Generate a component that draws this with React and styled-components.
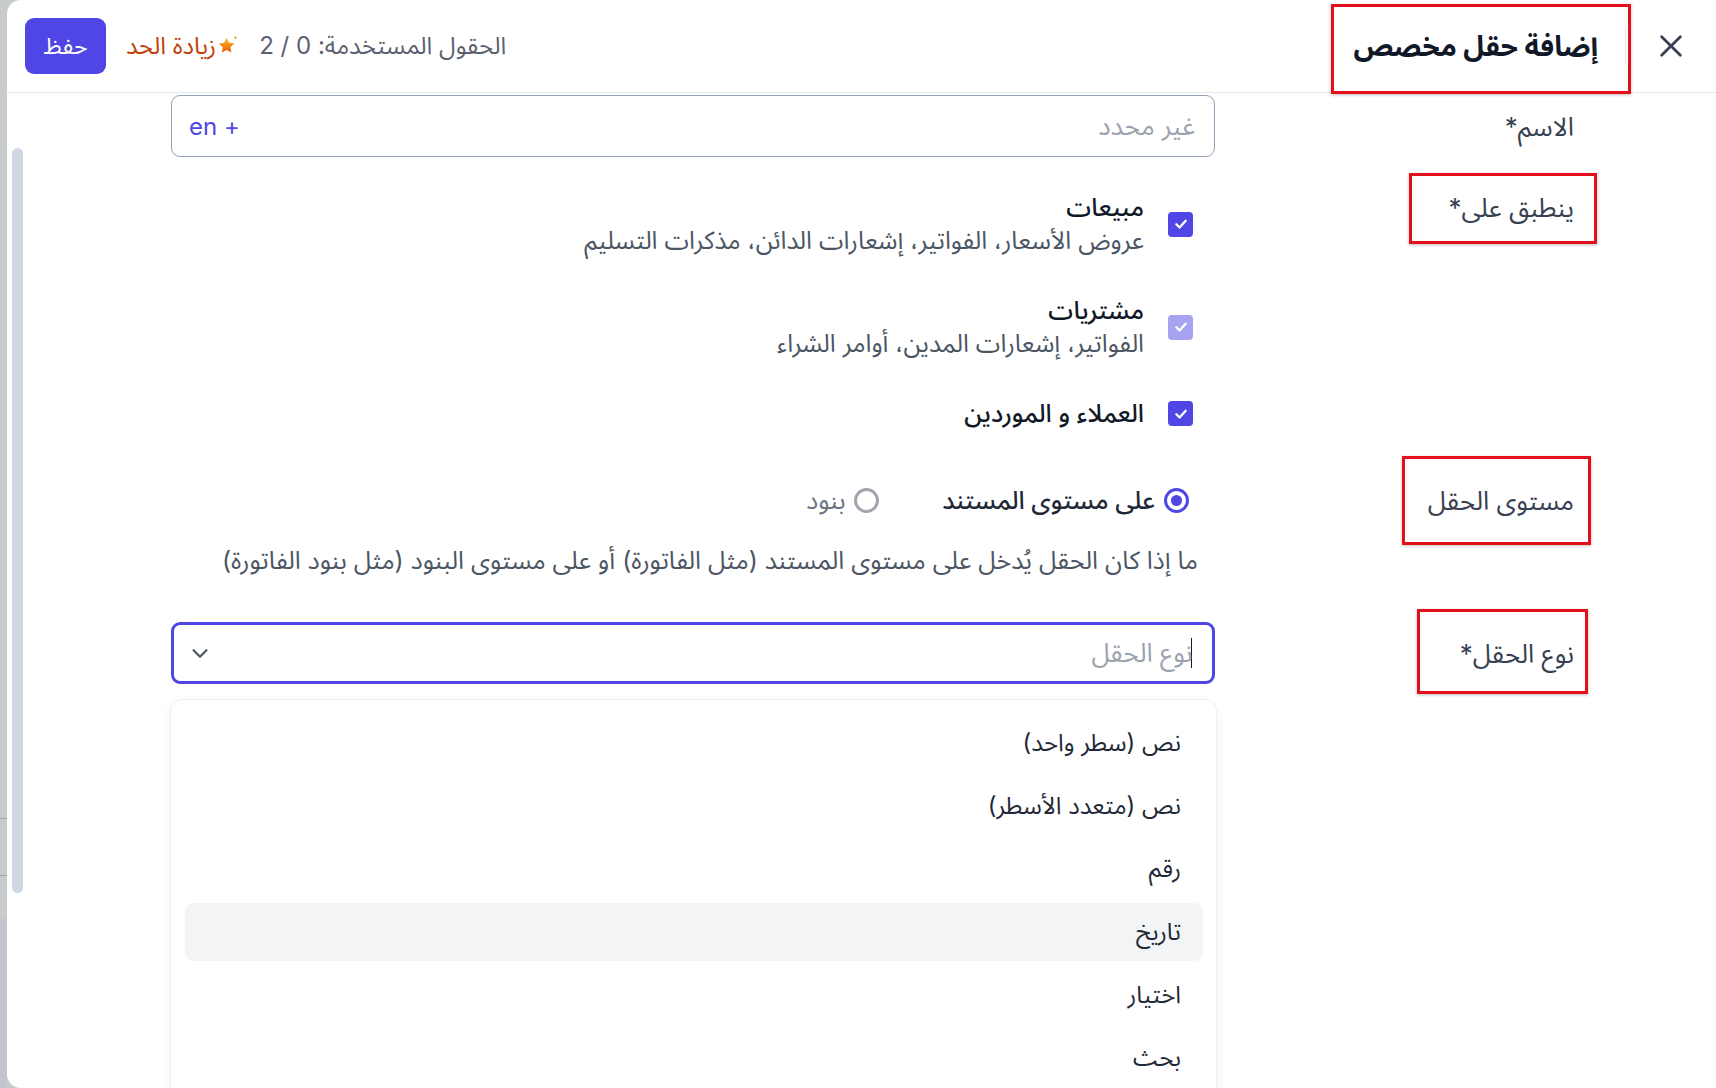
import styled, { createGlobalStyle } from "styled-components";

const GlobalStyle = createGlobalStyle`
  html, body {
    margin: 0;
    padding: 0;
    height: 100%;
  }
  body {
    font-family: Inter, "Noto Sans Arabic", "Noto Sans", "DejaVu Sans", sans-serif;
    background: #c9cccd;
    overflow: hidden;
    color: #1f2937;
  }
  #root {
    height: 100%;
  }
`;

const Page = styled.div`
  display: flex;
  height: 100vh;
`;

const Backdrop = styled.div`
  width: 7px;
  flex-shrink: 0;
  background:
    linear-gradient(#a3a7a9, #a3a7a9) 0 818px / 100% 1px no-repeat,
    linear-gradient(#a3a7a9, #a3a7a9) 0 875px / 100% 1px no-repeat,
    linear-gradient(#c9cccd 917px, #c3c6cc 917px);
`;

const Panel = styled.div`
  flex: 1;
  background: #fff;
  border-radius: 14px 0 0 14px;
  display: flex;
  flex-direction: column;
  overflow: hidden;
`;

const Header = styled.header`
  height: 93px;
  flex-shrink: 0;
  box-sizing: border-box;
  border-bottom: 1px solid #e5e7eb;
  display: flex;
  align-items: center;
  justify-content: space-between;
  padding: 0 31px 0 18px;
`;

const HeaderGroup = styled.div`
  display: flex;
  align-items: center;
  gap: ${(p) => p.$gap || 0}px;
`;

const CloseButton = styled.button`
  border: none;
  background: none;
  padding: 0;
  width: 28px;
  height: 28px;
  display: flex;
  align-items: center;
  justify-content: center;
  cursor: pointer;
  color: #374151;
`;

const Divider = styled.span`
  display: block;
  width: 1px;
  height: 34px;
  background: #e5e7eb;
  margin: 0 31px 0 27px;
`;

const Annotated = styled.span`
  position: relative;
  display: inline-block;
`;

const RedBox = styled.span`
  position: absolute;
  top: ${(p) => p.$t}px;
  right: ${(p) => p.$r}px;
  bottom: ${(p) => p.$b}px;
  width: ${(p) => p.$w}px;
  box-sizing: border-box;
  border: 3px solid #e3101b;
  box-shadow: 0 1px 3px rgba(0, 0, 0, 0.25);
  pointer-events: none;
`;

const Title = styled.h1`
  margin: 0;
  font-size: 28px;
  font-weight: 700;
  color: #111827;
  line-height: 40px;
`;

const Usage = styled.span`
  font-size: 24px;
  color: #5b6170;
`;

const Upgrade = styled.a`
  display: flex;
  align-items: center;
  gap: 1px;
  font-size: 24px;
  color: #c2410c;
  text-decoration: none;
  cursor: pointer;
`;

const SaveButton = styled.button`
  width: 81px;
  height: 56px;
  border: none;
  border-radius: 9px;
  background: #4f46e5;
  color: #fff;
  font-family: inherit;
  font-size: 23px;
  cursor: pointer;
`;

const Body = styled.div`
  flex: 1;
  display: flex;
  min-height: 0;
`;

const Form = styled.div`
  flex: 1;
  padding-right: 142px;
`;

const Row = styled.div`
  display: grid;
  grid-template-columns: 300px 1044px;
  column-gap: 59px;
  align-items: ${(p) => p.$align || "start"};
  margin-top: ${(p) => p.$mt || 0}px;
`;

const Label = styled.div`
  font-size: 26px;
  line-height: 33px;
  color: #374151;
`;

const TextInput = styled.div`
  height: 62px;
  box-sizing: border-box;
  border: 1.5px solid #94a3b8;
  border-radius: 9px;
  display: flex;
  align-items: center;
  justify-content: space-between;
  padding: 0 19px 0 17px;
  font-size: 26px;
`;

const Placeholder = styled.span`
  color: #9ca3af;
`;

const LangTag = styled.span`
  color: #4f46e5;
  font-size: 24px;
`;

const CheckList = styled.div`
  display: flex;
  flex-direction: column;
  gap: 37px;
  padding-right: 22px;
`;

const CheckItem = styled.label`
  display: flex;
  align-items: center;
  gap: 24px;
  cursor: pointer;
`;

const CheckBox = styled.span`
  width: 25px;
  height: 25px;
  flex-shrink: 0;
  border-radius: 4px;
  background: ${(p) => (p.$disabled ? "#a7a3f1" : "#4f46e5")};
  display: flex;
  align-items: center;
  justify-content: center;
`;

const CheckText = styled.div`
  display: flex;
  flex-direction: column;
`;

const CheckTitle = styled.span`
  font-size: 25px;
  font-weight: 500;
  line-height: 33px;
  color: #111827;
`;

const CheckHint = styled.span`
  font-size: 24.8px;
  line-height: 33px;
  color: #4b5563;
`;

const RadioGroup = styled.div`
  display: flex;
  align-items: center;
  gap: 63px;
  padding-right: 26px;
  height: 33px;
`;

const RadioOption = styled.label`
  display: flex;
  align-items: center;
  gap: 9px;
  font-size: 25px;
  font-weight: ${(p) => (p.$checked ? 500 : 400)};
  color: ${(p) => (p.$checked ? "#1f2937" : "#6b7280")};
  cursor: pointer;
`;

const RadioDot = styled.span`
  width: 25px;
  height: 25px;
  box-sizing: border-box;
  border-radius: 50%;
  border: 3px solid ${(p) => (p.$checked ? "#4f46e5" : "#a1a5ad")};
  display: flex;
  align-items: center;
  justify-content: center;

  &::after {
    content: "";
    width: 11px;
    height: 11px;
    border-radius: 50%;
    background: ${(p) => (p.$checked ? "#4f46e5" : "transparent")};
  }
`;

const Helper = styled.p`
  margin: 27px 0 0;
  padding-right: 17px;
  font-size: 25px;
  line-height: 33px;
  color: #4b5563;
`;

const SelectWrap = styled.div`
  position: relative;
`;

const SelectBox = styled.div`
  height: 62px;
  box-sizing: border-box;
  border: 3px solid #4f46e5;
  border-radius: 9px;
  display: flex;
  align-items: center;
  justify-content: space-between;
  padding: 0 20px 0 15px;
  font-size: 26px;
`;

const Typed = styled.span`
  display: flex;
  align-items: center;
`;

const Caret = styled.span`
  width: 1.5px;
  height: 30px;
  background: #111827;
  margin-left: -2px;
`;

const Menu = styled.ul`
  position: absolute;
  top: calc(100% + 15px);
  left: -1px;
  right: -2px;
  margin: 0;
  padding: 14px 13px 20px 14px;
  list-style: none;
  background: #fff;
  border: 1px solid #efefef;
  border-radius: 12px;
  box-shadow: 0 4px 14px rgba(0, 0, 0, 0.05);
  display: flex;
  flex-direction: column;
  gap: 5px;
`;

const MenuItem = styled.li`
  height: 58px;
  display: flex;
  align-items: center;
  padding: 0 22px;
  border-radius: 9px;
  font-size: 24px;
  color: #1f2937;
  background: ${(p) => (p.$active ? "#f3f4f6" : "transparent")};
  cursor: pointer;
`;

const ScrollTrack = styled.div`
  width: 11px;
  flex-shrink: 0;
  padding-left: 5px;
`;

const ScrollThumb = styled.div`
  margin-top: 55px;
  height: 745px;
  border-radius: 6px;
  background: #cfd7e3;
`;

const CheckIcon = () => (
  <svg width="14" height="14" viewBox="0 0 24 24" fill="none" stroke="#fff" strokeWidth="4" strokeLinecap="round" strokeLinejoin="round">
    <polyline points="4 12.5 9.5 18 20 6.5" />
  </svg>
);

const StarIcon = () => (
  <svg width="22" height="22" viewBox="0 0 24 24">
    <defs>
      <linearGradient id="starG" x1="0" y1="0" x2="0" y2="1">
        <stop offset="0" stopColor="#fbbf24" />
        <stop offset="1" stopColor="#ea580c" />
      </linearGradient>
    </defs>
    <path d="M10.5 3l2.6 5.4 5.9.8-4.3 4.1 1 5.9-5.2-2.8-5.2 2.8 1-5.9L2 9.2l5.9-.8z" fill="url(#starG)" />
    <path d="M20 .8l.6 1.5 1.5.6-1.5.6-.6 1.5-.6-1.5-1.5-.6 1.5-.6z" fill="#f59e0b" />
  </svg>
);

const options = ["نص (سطر واحد)", "نص (متعدد الأسطر)", "رقم", "تاريخ", "اختيار", "بحث"];

export default function App() {
  return (
    <>
      <GlobalStyle />
      <Page>
        <Backdrop />
        <Panel dir="rtl">
          <Header>
            <HeaderGroup>
              <CloseButton aria-label="إغلاق">
                <svg width="28" height="28" viewBox="0 0 24 24" fill="none" stroke="currentColor" strokeWidth="2.4" strokeLinecap="round">
                  <line x1="4" y1="4" x2="20" y2="20" />
                  <line x1="20" y1="4" x2="4" y2="20" />
                </svg>
              </CloseButton>
              <Divider />
              <Annotated>
                <Title>إضافة حقل مخصص</Title>
                <RedBox $t={-22} $r={-33} $b={-28} $w={300} />
              </Annotated>
            </HeaderGroup>
            <HeaderGroup $gap={20}>
              <Usage>الحقول المستخدمة: 0 / 2</Usage>
              <Upgrade>
                <StarIcon />
                زيادة الحد
              </Upgrade>
              <SaveButton>حفظ</SaveButton>
            </HeaderGroup>
          </Header>

          <Body>
            <Form>
              <Row $align="center" $mt={2}>
                <Label>الاسم*</Label>
                <TextInput>
                  <Placeholder>غير محدد</Placeholder>
                  <LangTag>+ en</LangTag>
                </TextInput>
              </Row>

              <Row $mt={34}>
                <Label>
                  <Annotated>
                    ينطبق على*
                    <RedBox $t={-18} $r={-23} $b={-20} $w={188} />
                  </Annotated>
                </Label>
                <CheckList>
                  <CheckItem>
                    <CheckBox>
                      <CheckIcon />
                    </CheckBox>
                    <CheckText>
                      <CheckTitle>مبيعات</CheckTitle>
                      <CheckHint>عروض الأسعار، الفواتير، إشعارات الدائن، مذكرات التسليم</CheckHint>
                    </CheckText>
                  </CheckItem>
                  <CheckItem>
                    <CheckBox $disabled>
                      <CheckIcon />
                    </CheckBox>
                    <CheckText>
                      <CheckTitle>مشتريات</CheckTitle>
                      <CheckHint>الفواتير، إشعارات المدين، أوامر الشراء</CheckHint>
                    </CheckText>
                  </CheckItem>
                  <CheckItem>
                    <CheckBox>
                      <CheckIcon />
                    </CheckBox>
                    <CheckText>
                      <CheckTitle>العملاء و الموردين</CheckTitle>
                    </CheckText>
                  </CheckItem>
                </CheckList>
              </Row>

              <Row $mt={54}>
                <Label>
                  <Annotated>
                    مستوى الحقل
                    <RedBox $t={-28} $r={-17} $b={-28} $w={189} />
                  </Annotated>
                </Label>
                <div>
                  <RadioGroup>
                    <RadioOption $checked>
                      <RadioDot $checked />
                      على مستوى المستند
                    </RadioOption>
                    <RadioOption>
                      <RadioDot />
                      بنود
                    </RadioOption>
                  </RadioGroup>
                  <Helper>ما إذا كان الحقل يُدخل على مستوى المستند (مثل الفاتورة) أو على مستوى البنود (مثل بنود الفاتورة)</Helper>
                </div>
              </Row>

              <Row $align="center" $mt={45}>
                <Label>
                  <Annotated>
                    نوع الحقل*
                    <RedBox $t={-28} $r={-14} $b={-24} $w={171} />
                  </Annotated>
                </Label>
                <SelectWrap>
                  <SelectBox>
                    <Typed>
                      <Caret />
                      <Placeholder>نوع الحقل</Placeholder>
                    </Typed>
                    <svg width="22" height="22" viewBox="0 0 24 24" fill="none" stroke="#4b5563" strokeWidth="2.4" strokeLinecap="round" strokeLinejoin="round">
                      <polyline points="5 9 12 16 19 9" />
                    </svg>
                  </SelectBox>
                  <Menu>
                    {options.map((o) => (
                      <MenuItem key={o} $active={o === "تاريخ"}>
                        {o}
                      </MenuItem>
                    ))}
                  </Menu>
                </SelectWrap>
              </Row>
            </Form>
            <ScrollTrack>
              <ScrollThumb />
            </ScrollTrack>
          </Body>
        </Panel>
      </Page>
    </>
  );
}
